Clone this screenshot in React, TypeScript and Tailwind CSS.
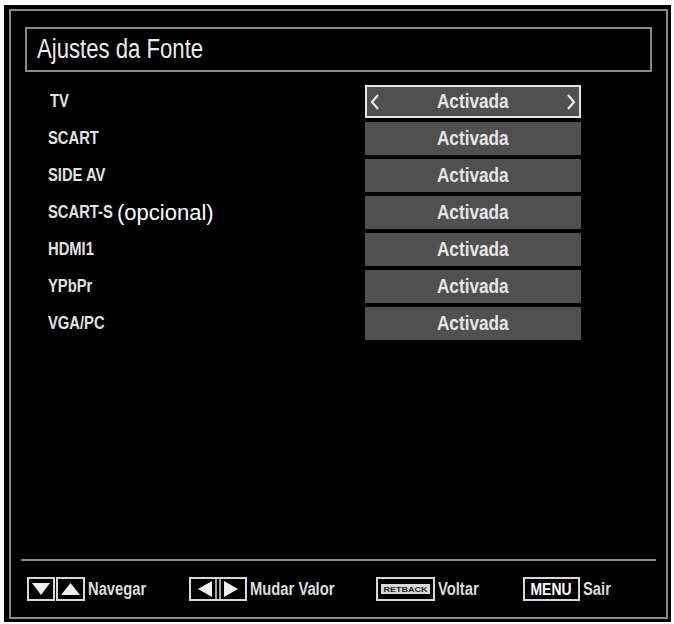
const SANS = { fontFamily: '"Liberation Sans", Arial, sans-serif' };

const sources = ["TV", "SCART", "SIDE AV", "SCART-S", "HDMI1", "YPbPr", "VGA/PC"];

// the TV menu font is a condensed one; squeeze Liberation Sans to Arial Narrow proportions
function Narrow({ children, className, center }: { children: React.ReactNode, className?: string, center?: boolean }) {
    return (
        <span className={"inline-block whitespace-nowrap scale-x-[0.82] " + (center ? "origin-center " : "origin-left ") + (className ?? "")}
            style={SANS}>{children}</span>
    );
}

function Chevron({ dir }: { dir: "left" | "right" }) {
    return (
        <svg width="10" height="16" viewBox="0 0 10 16" className="shrink-0">
            <polyline
                points={dir === "left" ? "8,1 2,8 8,15" : "2,1 8,8 2,15"}
                fill="none" stroke="#e8e8e8" strokeWidth="2.2" strokeLinejoin="miter"/>
        </svg>
    );
}

function ValueBox({ selected }: { selected: boolean }) {
    return (
        <div className={"w-[216px] h-[33px] bg-[#505050] flex items-center " +
            (selected ? "border-2 border-[#e4e4e4] justify-between px-[3px]" : "justify-center")}>
            {selected && <Chevron dir="left"/>}
            <Narrow center className="text-[21px] font-bold text-[#e6e6e6] leading-none -mt-[2px]">Activada</Narrow>
            {selected && <Chevron dir="right"/>}
        </div>
    );
}

function NavIcon() {
    return (
        <svg width="58" height="24" viewBox="0 0 58 24" className="shrink-0">
            <rect x="1" y="1" width="26" height="22" fill="none" stroke="#d8d8d8" strokeWidth="2"/>
            <rect x="30" y="1" width="27" height="22" fill="none" stroke="#d8d8d8" strokeWidth="2"/>
            <polygon points="5,6 23,6 14,18" fill="#f0f0f0"/>
            <polygon points="34,18 53,18 43.5,6" fill="#f0f0f0"/>
        </svg>
    );
}

function ValueIcon() {
    return (
        <svg width="58" height="24" viewBox="0 0 58 24" className="shrink-0">
            <rect x="1" y="1" width="56" height="22" fill="none" stroke="#d8d8d8" strokeWidth="2"/>
            <line x1="27" y1="2" x2="27" y2="22" stroke="#d8d8d8" strokeWidth="1.5"/>
            <line x1="31" y1="2" x2="31" y2="22" stroke="#d8d8d8" strokeWidth="1.5"/>
            <polygon points="23,4 23,20 9,12" fill="#f0f0f0"/>
            <polygon points="35,4 35,20 49,12" fill="#f0f0f0"/>
        </svg>
    );
}

function BackIcon() {
    return (
        <svg width="59" height="24" viewBox="0 0 59 24" className="shrink-0">
            <rect x="1" y="1" width="57" height="22" fill="none" stroke="#d8d8d8" strokeWidth="2"/>
            <rect x="5" y="7" width="49" height="10" fill="#d8d8d8"/>
            <text x="29.5" y="15" textAnchor="middle" fontSize="8" fontWeight="bold" fill="#222"
                fontFamily="Liberation Sans, Arial, sans-serif" textLength="44" lengthAdjust="spacingAndGlyphs">RETBACK</text>
        </svg>
    );
}

function FooterItem({ icon, label, width }: { icon: React.ReactNode, label: string, width: string }) {
    return (
        <div className={"flex items-center gap-[3px] " + width}>
            {icon}
            <Narrow className="text-[18px] font-bold text-[#dcdcdc] leading-none">{label}</Narrow>
        </div>
    );
}

export default function App() {
    return (
        <div className="w-[674px] h-[624px] bg-white pt-[5px] pl-[4px]">
            <div className="w-[667px] h-[617px] bg-black pt-[4px] pl-[5px]">
                <div className="w-[659px] h-[610px] border-2 border-[#8a8a8a] flex flex-col">
                    {/* title */}
                    <div className="ml-[14px] mt-[16px] w-[627px] h-[45px] border-2 border-[#8a8a8a] flex items-center pl-[10px]">
                        <Narrow className="text-[27px] text-[#ececec] leading-none">Ajustes da Fonte</Narrow>
                    </div>

                    {/* source list */}
                    <div className="mt-[11px] pl-[37px] flex flex-col">
                        {sources.map((s, k) =>
                            <div key={s} className="flex items-center h-[37px]">
                                <div className="w-[317px] flex items-center">
                                    <div className={"shrink-0 " + (s === "SCART-S" ? "w-[69px]" : "")}>
                                        <Narrow className={"text-[18px] font-bold text-[#e2e2e2] " + (k === 0 ? "ml-[2px]" : "")}>{s}</Narrow>
                                    </div>
                                    {s === "SCART-S" &&
                                        <span className="text-[22px] text-white" style={SANS}>(opcional)</span>}
                                </div>
                                <ValueBox selected={k === 0}/>
                            </div>
                        )}
                    </div>

                    <div className="flex-1"></div>
                    <div className="mx-[10px] h-[2px] bg-[#8a8a8a]"></div>

                    {/* key hints */}
                    <div className="h-[56px] flex items-center pl-[16px]">
                        <FooterItem icon={<NavIcon/>} label="Navegar" width="w-[162px]"/>
                        <FooterItem icon={<ValueIcon/>} label="Mudar Valor" width="w-[187px]"/>
                        <FooterItem icon={<BackIcon/>} label="Voltar" width="w-[147px]"/>
                        <FooterItem label="Sair" width="w-[100px]" icon={
                            <div className="w-[57px] h-[24px] shrink-0 border-2 border-[#d8d8d8] flex items-center justify-center">
                                <Narrow center className="text-[17px] font-bold text-white leading-none">MENU</Narrow>
                            </div>
                        }/>
                    </div>
                </div>
            </div>
        </div>
    );
}
